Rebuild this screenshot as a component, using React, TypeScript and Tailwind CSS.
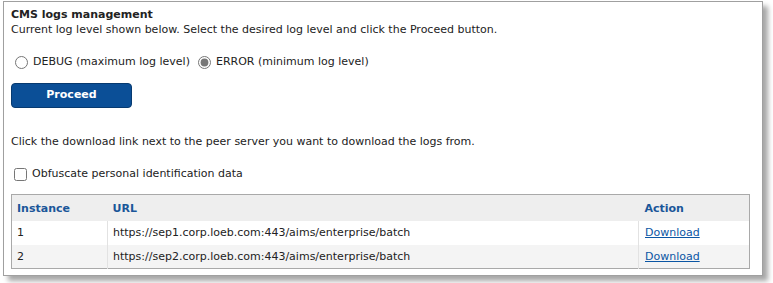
import { useState } from 'react';

type Peer = {
    id: number,
    url: string
}

const peers: Peer[] = [
    { id: 1, url: "https://sep1.corp.loeb.com:443/aims/enterprise/batch" },
    { id: 2, url: "https://sep2.corp.loeb.com:443/aims/enterprise/batch" },
]

export default function App() {
    const [level, setLevel] = useState<string>("error")
    const [obfuscate, setObfuscate] = useState<boolean>(false)

    return (
        <div className="w-[773px] h-[283px] bg-white pl-[3px] pt-[1px]" style={{ fontFamily: '"DejaVu Sans", Verdana, sans-serif' }}>
            <div className="w-[760px] h-[275px] border border-[#a0a0a0] bg-white shadow-[5px_5px_5px_rgba(0,0,0,0.35)] pl-[7px] pr-[13px] pt-[5px] text-[11px] text-[#222]">
                <h1 className="font-bold leading-[15px]">CMS logs management</h1>
                <p className="leading-[15px]">Current log level shown below. Select the desired log level and click the Proceed button.</p>

                <div className="mt-[16px] ml-[4px] flex flex-row items-center gap-[8px] h-[18px]">
                    <label className="flex flex-row items-center gap-[5px]">
                        <input type="radio" name="level" checked={level === "debug"} onChange={() => setLevel("debug")} className="m-0 w-[13px] h-[13px]" />
                        <span>DEBUG (maximum log level)</span>
                    </label>
                    <label className="flex flex-row items-center gap-[5px]">
                        <input type="radio" name="level" checked={level === "error"} onChange={() => setLevel("error")} className="m-0 w-[13px] h-[13px] accent-[#777]" />
                        <span>ERROR (minimum log level)</span>
                    </label>
                </div>

                <button className="mt-[12px] w-[121px] h-[25px] rounded-[4px] bg-[#0b4f97] border border-[#073a70] text-white text-[11px] font-bold">
                    Proceed
                </button>

                <p className="mt-[26px] leading-[15px]">Click the download link next to the peer server you want to download the logs from.</p>

                <label className="mt-[17px] ml-[3px] flex flex-row items-center gap-[5px] h-[16px]">
                    <input type="checkbox" checked={obfuscate} onChange={(e) => setObfuscate(e.target.checked)} className="m-0 w-[13px] h-[13px]" />
                    <span>Obfuscate personal identification data</span>
                </label>

                <table className="mt-[12px] w-[739px] border border-[#a9a9a9] border-collapse">
                    <thead>
                        <tr className="bg-[#eeeeee] h-[26px]">
                            <th className="w-[96px] text-left font-bold text-[#1a5699] pl-[5px] pt-[2px]">Instance</th>
                            <th className="text-left font-bold text-[#1a5699] pl-[5px] pt-[2px]">URL</th>
                            <th className="w-[111px] text-left font-bold text-[#1a5699] pl-[6px] pt-[2px]">Action</th>
                        </tr>
                    </thead>
                    <tbody>
                        {peers.map((p, i) => (
                            <tr key={p.id} className={"h-[24px] " + (i % 2 === 0 ? "bg-white" : "bg-[#f4f4f4]")}>
                                <td className="pl-[5px] pt-[2px] border-r border-[#e2e2e2]">{p.id}</td>
                                <td className="pl-[5px] pt-[2px] border-r border-[#e2e2e2]">{p.url}</td>
                                <td className="pl-[6px] pt-[2px]"><a href="#" className="text-[#0b56a4] underline">Download</a></td>
                            </tr>
                        ))}
                    </tbody>
                </table>
            </div>
        </div>
    )
}
